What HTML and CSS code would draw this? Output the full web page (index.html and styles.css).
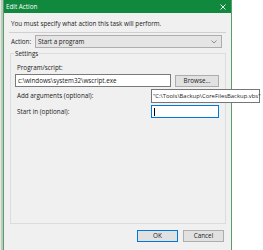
FILE: index.html
```html
<!DOCTYPE html>
<html lang="en">
<head>
    <meta charset="UTF-8">
    <title>Edit Action</title>
    <link rel="stylesheet" href="styles.css">
</head>
<body>
    <div class="desk">
        <div class="edge"></div>
        <div class="dialog">
            <div class="titlebar">
                <span class="title">Edit Action</span>
                <svg class="close" width="6" height="6" viewBox="0 0 6 6"><path d="M0.5 0.5 L5.5 5.5 M5.5 0.5 L0.5 5.5" stroke="#fff" stroke-width="0.9"/></svg>
            </div>
            <div class="content">
                <p class="intro">You must specify what action this task will perform.</p>
                <div class="rule"></div>
                <div class="action-row">
                    <span class="label">Action:</span>
                    <div class="combo">
                        <span>Start a program</span>
                        <svg width="6" height="4" viewBox="0 0 6 4"><path d="M0.5 0.5 L3 3 L5.5 0.5" fill="none" stroke="#777" stroke-width="0.8"/></svg>
                    </div>
                </div>
                <div class="group">
                    <span class="legend">Settings</span>
                    <div class="field-label">Program/script:</div>
                    <div class="program-row">
                        <div class="textbox wide">c:\windows\system32\wscript.exe</div>
                        <div class="button browse">Browse...</div>
                    </div>
                    <div class="arg-row">
                        <span class="field-label">Add arguments (optional):</span>
                        <div class="tooltip">"C:\Tools\Backup\CoreFilesBackup.vbs"</div>
                    </div>
                    <div class="start-row">
                        <span class="field-label">Start in (optional):</span>
                        <div class="textbox start"><span class="caret"></span></div>
                    </div>
                </div>
                <div class="buttons">
                    <div class="button ok">OK</div>
                    <div class="button">Cancel</div>
                </div>
            </div>
        </div>
    </div>
</body>
</html>
```

FILE: styles.css
```css
body {
    margin: 0;
    background-color: #fff;
    font-family: "Open Sans", "Noto Sans", sans-serif;
    font-size: 6.3px;
    color: #222;
    overflow: hidden;
}
.desk {
    display: flex;
    height: 250px;
}
.edge {
    width: 1px;
    border-right: 2px solid #b9cbb9;
    background-color: #e8e8e8;
}
.dialog {
    width: 227px;
    border-left: 1px solid #5a9d68;
    border-right: 1px solid #5a9d68;
    background-color: #f0f0f0;
}
.titlebar {
    height: 13px;
    background-color: #10893e;
    color: #fff;
    display: flex;
    align-items: center;
    justify-content: space-between;
    padding: 0 5px 0 2px;
}
.content {
    padding: 6px 5px 0 5px;
}
.intro {
    margin: 0 0 0 2px;
    line-height: 10px;
}
.rule {
    height: 1px;
    background-color: #d0d0d0;
    margin-top: 3px;
}
.action-row {
    display: flex;
    align-items: center;
    height: 13px;
    margin-top: 2px;
    padding-left: 2px;
}
.action-row .label {
    width: 24px;
}
.combo {
    flex: 1;
    height: 13px;
    box-sizing: border-box;
    margin-right: 4px;
    border: 1px solid #adadad;
    background-color: #e5e5e5;
    display: flex;
    align-items: center;
    justify-content: space-between;
    padding: 0 4px 0 2px;
}
.group {
    position: relative;
    box-sizing: border-box;
    margin: 5px 0 0 1px;
    height: 171px;
    border: 1px solid #dcdcdc;
    padding: 9px 0 0 4px;
}
.legend {
    position: absolute;
    top: -5px;
    left: 3px;
    line-height: 10px;
    background-color: #f0f0f0;
    padding: 0 1px;
}
.field-label {
    display: block;
    line-height: 10px;
    padding-left: 2px;
}
.program-row {
    display: flex;
    align-items: center;
    margin-top: 1px;
}
.textbox {
    box-sizing: border-box;
    height: 13px;
    border: 1px solid #7a7a7a;
    background-color: #fff;
    line-height: 11px;
    padding: 0 2px;
}
.wide {
    width: 156px;
}
.button {
    box-sizing: border-box;
    height: 12px;
    width: 41px;
    border: 1px solid #adadad;
    background-color: #e1e1e1;
    text-align: center;
    line-height: 10px;
}
.browse {
    margin-left: 4px;
    width: 44px;
}
.arg-row,
.start-row {
    display: grid;
    grid-template-columns: 136px auto;
    align-items: center;
    margin-top: 2px;
}
.tooltip {
    box-sizing: border-box;
    border: 1px solid #767676;
    background-color: #fff;
    height: 14px;
    line-height: 12px;
    font-size: 5.9px;
    padding: 0 1px;
    width: 109px;
    white-space: nowrap;
}
.start {
    width: 68px;
    border-color: #0078d7;
}
.caret {
    display: inline-block;
    width: 1px;
    height: 8px;
    background-color: #000;
    vertical-align: middle;
}
.buttons {
    display: flex;
    justify-content: flex-end;
    gap: 5px;
    margin-top: 6px;
    padding-right: 2px;
}
.ok {
    border-color: #0078d7;
}
```
